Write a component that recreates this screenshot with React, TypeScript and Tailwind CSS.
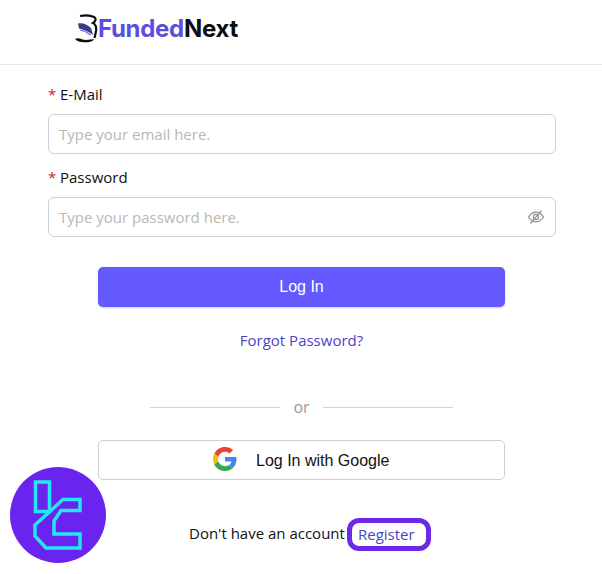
import React from "react";

const FieldLabel: React.FC<{ text: string }> = ({ text }) => (
  <div className="flex items-center h-[20px] text-[15px] leading-5 text-[#111]">
    <span className="text-[#c8203f] mr-[5px] text-[15px] w-[7px]">*</span>
    {text}
  </div>
);

const EyeOff = () => (
  <svg width="18" height="18" viewBox="0 0 18 18" fill="none" stroke="#999999" strokeWidth="1.4">
    <path d="M1.5 9C3.5 5.8 6 4.2 9 4.2S14.5 5.8 16.5 9C14.5 12.2 12 13.8 9 13.8S3.5 12.2 1.5 9Z" />
    <circle cx="9" cy="9" r="2.6" />
    <path d="M14.5 2.5L3.5 15.5" />
  </svg>
);

const GoogleLogo = () => (
  <svg width="24" height="24" viewBox="0 0 48 48">
    <path fill="#EA4335" d="M24 9.5c3.5 0 6.700 1.200 9.200 3.600l6.900-6.900C35.900 2.400 30.500 0 24 0 14.600 0 6.500 5.400 2.600 13.200l8 6.200C12.400 13.700 17.700 9.500 24 9.500z" />
    <path fill="#4285F4" d="M46.900 24.500c0-1.600-.1-3.100-.4-4.500H24v9h12.900c-.6 3-2.200 5.500-4.800 7.200l7.700 6c4.500-4.200 7.100-10.300 7.100-17.700z" />
    <path fill="#FBBC05" d="M10.500 28.600c-.5-1.400-.8-3-.8-4.600s.3-3.200.8-4.600l-8-6.200C.9 16.500 0 20.100 0 24s.9 7.500 2.600 10.800l7.900-6.200z" />
    <path fill="#34A853" d="M24 48c6.500 0 11.900-2.100 15.900-5.800l-7.700-6c-2.200 1.400-4.900 2.300-8.200 2.300-6.300 0-11.600-4.200-13.500-9.900l-8 6.200C6.500 42.600 14.600 48 24 48z" />
  </svg>
);

const BrandMark = () => (
  <svg width="23" height="29" viewBox="0 0 23 29" fill="none">
    <path d="M5 2C10 1 16 1.500 19 3C21.500 4.500 21 7 18 9C21 10.500 21.500 13.500 21 17C20.500 20 20 22 19.500 24" stroke="#0d0d14" strokeWidth="2.200" />
    <path d="M3 9.500C7 8.500 12 10 16 14L18 21C13 17.500 8 15 4 14.500Z" fill="#3d3a8c" />
    <path d="M5 16C9 16.500 12.500 18.500 15.500 21" stroke="#6a66c8" strokeWidth="1.200" />
    <path d="M0 25C4 22.800 7 26 11 26C14 26 17 25.300 19.500 25.300C17 28 13 28.500 9 28.300C5 28 2 27.500 0 25Z" fill="#0d0d14" />
  </svg>
);

const TradingBadge = () => (
  <div className="absolute left-[10px] top-[467px] w-[96px] h-[96px] rounded-full bg-[#6a24f0]">
    <svg width="96" height="96" viewBox="0 0 96 96" fill="none" stroke="#25e6f5" strokeWidth="3.500">
      <path d="M25.500 15H39.500V44.500H25.500Z" />
      <path d="M51 43.500H70V32.500H53L25 58V69L36 81H70V67H44V54Z" />
    </svg>
  </div>
);

const App: React.FC = () => {
  return (
    <div className="relative w-[602px] h-[574px] bg-white overflow-hidden font-['Open_Sans','Noto_Sans',sans-serif]">
      <div className="h-[65px] border-b border-[#e8e8e8] pl-[75px] pt-[14px] flex items-start">
        <BrandMark />
        <span className="font-['Inter',sans-serif] text-[24px] leading-[29px] font-bold tracking-[-0.3px]">
          <span className="text-[#5a50e0]">Funded</span>
          <span className="text-[#0d0d14]">Next</span>
        </span>
      </div>

      <div className="pl-[48px] pr-[46px] pt-[19px] flex flex-col">
        <FieldLabel text="E-Mail" />
        <div className="mt-[10px] h-[40px] border border-[#d0d0d0] rounded-[6px] flex items-center px-[10px] text-[15px] text-[#b8b8b8]">
          Type your email here.
        </div>
        <div className="mt-[13px]">
          <FieldLabel text="Password" />
        </div>
        <div className="mt-[10px] h-[40px] border border-[#d0d0d0] rounded-[6px] flex items-center justify-between pl-[10px] pr-[10px] text-[15px] text-[#b8b8b8]">
          Type your password here.
          <EyeOff />
        </div>
      </div>

      <div className="mx-[98px] w-[407px] flex flex-col items-center">
        <div className="mt-[30px] w-full h-[40px] rounded-[5px] bg-[#6359ff] text-white flex items-center justify-center font-['Liberation_Sans',sans-serif] text-[16px] shadow-[0_1px_2px_rgba(0,0,0,0.2)]">
          Log In
        </div>
        <div className="mt-[23px] h-[20px] leading-5 text-[15px] text-[#4a45c8]">Forgot Password?</div>
        <div className="mt-[47px] w-[303px] h-[20px] flex items-center text-[16px] text-[#9a9a9a]">
          <div className="flex-1 h-px bg-[#d4d4d4]" />
          <span className="px-[13px]">or</span>
          <div className="flex-1 h-px bg-[#d4d4d4]" />
        </div>
        <div className="mt-[23px] w-full h-[40px] border border-[#d0d0d0] rounded-[5px] flex items-center pl-[114px] text-[16px] text-[#111] font-['Liberation_Sans',sans-serif]">
          <span className="-mt-[3px]"><GoogleLogo /></span>
          <span className="ml-[19px] mt-[2px]">Log In with Google</span>
        </div>
      </div>

      <div className="mt-[38px] pl-[189px] flex items-center h-[33px] text-[15px] text-[#111]">
        <span className="-mt-[2px]">Don't have an account</span>
        <span className="ml-auto mr-[171px] w-[84px] h-[33px] border-[5px] border-[#6d28e8] rounded-[12px] flex items-center pl-[6px] text-[15px] text-[#4a45c8]">
          <span className="-mt-px">Register</span>
        </span>
      </div>

      <TradingBadge />
    </div>
  );
};

export default App;
